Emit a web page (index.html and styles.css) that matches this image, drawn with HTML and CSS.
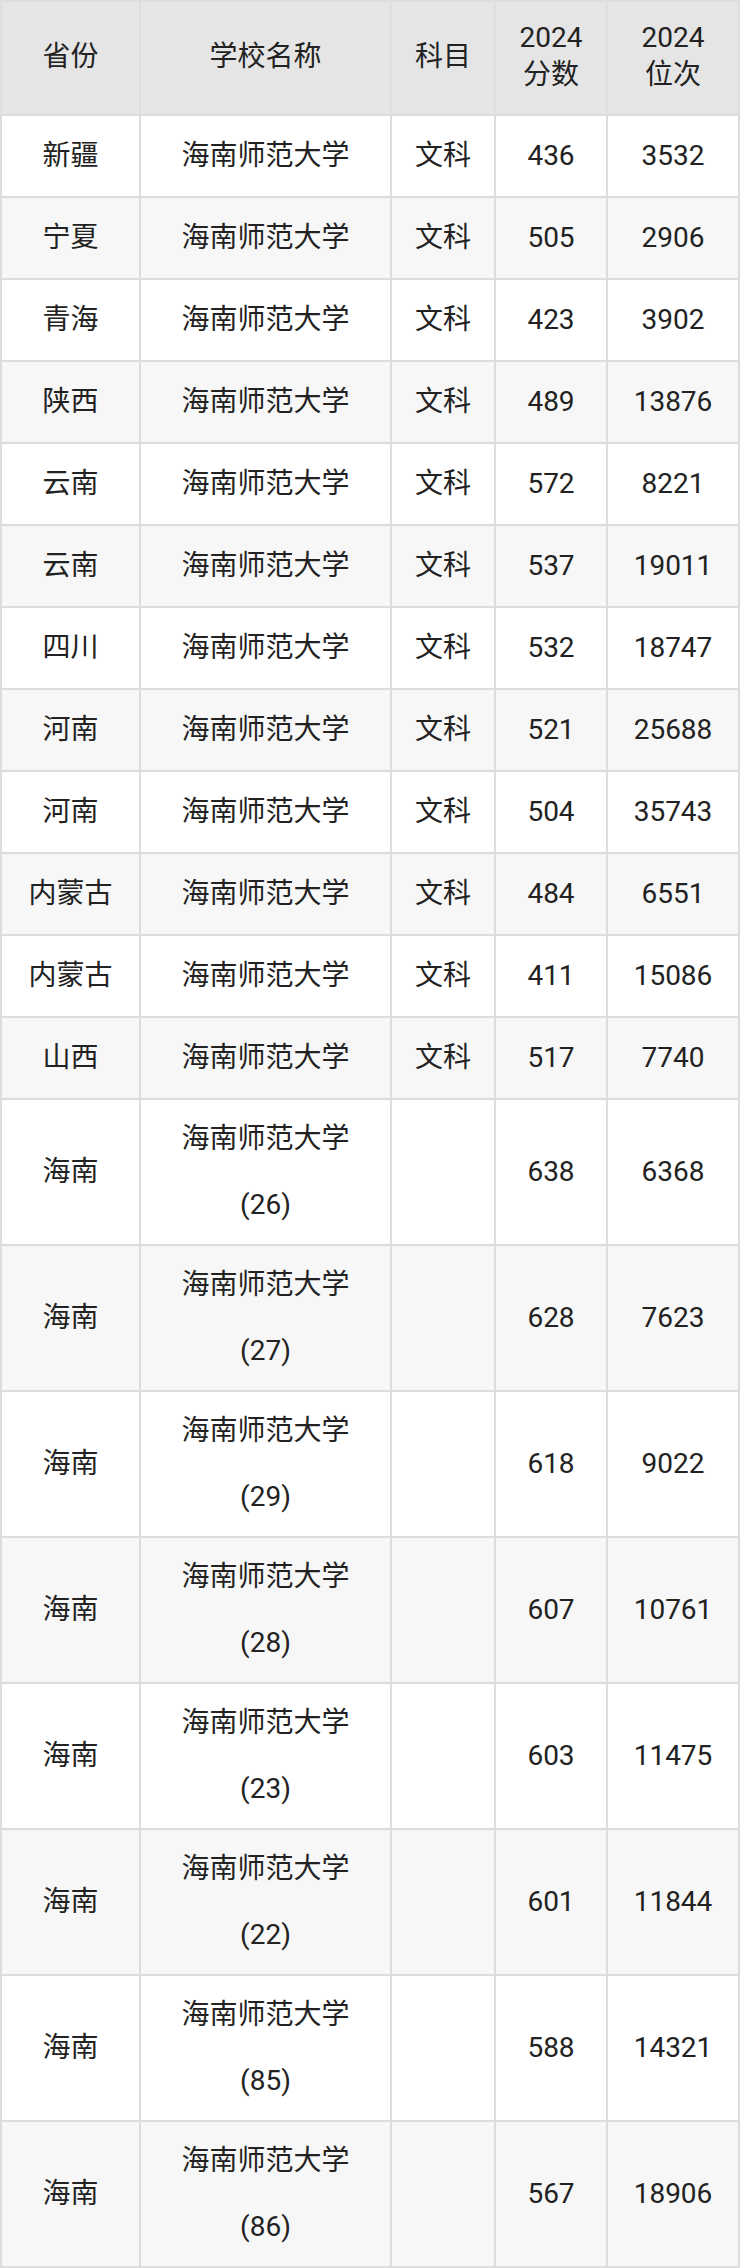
FILE: index.html
```html
<!DOCTYPE html>
<html lang="zh-CN">
<head>
<meta charset="utf-8">
<title>海南师范大学 2024 分数位次</title>
<link rel="stylesheet" href="styles.css">
</head>
<body>
<table class="score-table">
  <thead>
    <tr>
      <th class="c1">省份</th>
      <th class="c2">学校名称</th>
      <th class="c3">科目</th>
      <th class="c4">2024<br>分数</th>
      <th class="c5">2024<br>位次</th>
    </tr>
  </thead>
  <tbody>
    <tr><td>新疆</td><td>海南师范大学</td><td>文科</td><td>436</td><td>3532</td></tr>
    <tr><td>宁夏</td><td>海南师范大学</td><td>文科</td><td>505</td><td>2906</td></tr>
    <tr><td>青海</td><td>海南师范大学</td><td>文科</td><td>423</td><td>3902</td></tr>
    <tr><td>陕西</td><td>海南师范大学</td><td>文科</td><td>489</td><td>13876</td></tr>
    <tr><td>云南</td><td>海南师范大学</td><td>文科</td><td>572</td><td>8221</td></tr>
    <tr><td>云南</td><td>海南师范大学</td><td>文科</td><td>537</td><td>19011</td></tr>
    <tr><td>四川</td><td>海南师范大学</td><td>文科</td><td>532</td><td>18747</td></tr>
    <tr><td>河南</td><td>海南师范大学</td><td>文科</td><td>521</td><td>25688</td></tr>
    <tr><td>河南</td><td>海南师范大学</td><td>文科</td><td>504</td><td>35743</td></tr>
    <tr><td>内蒙古</td><td>海南师范大学</td><td>文科</td><td>484</td><td>6551</td></tr>
    <tr><td>内蒙古</td><td>海南师范大学</td><td>文科</td><td>411</td><td>15086</td></tr>
    <tr><td>山西</td><td>海南师范大学</td><td>文科</td><td>517</td><td>7740</td></tr>
    <tr><td>海南</td><td class="two">海南师范大学<br>(26)</td><td></td><td>638</td><td>6368</td></tr>
    <tr><td>海南</td><td class="two">海南师范大学<br>(27)</td><td></td><td>628</td><td>7623</td></tr>
    <tr><td>海南</td><td class="two">海南师范大学<br>(29)</td><td></td><td>618</td><td>9022</td></tr>
    <tr><td>海南</td><td class="two">海南师范大学<br>(28)</td><td></td><td>607</td><td>10761</td></tr>
    <tr><td>海南</td><td class="two">海南师范大学<br>(23)</td><td></td><td>603</td><td>11475</td></tr>
    <tr><td>海南</td><td class="two">海南师范大学<br>(22)</td><td></td><td>601</td><td>11844</td></tr>
    <tr><td>海南</td><td class="two">海南师范大学<br>(85)</td><td></td><td>588</td><td>14321</td></tr>
    <tr><td>海南</td><td class="two">海南师范大学<br>(86)</td><td></td><td>567</td><td>18906</td></tr>
  </tbody>
</table>
</body>
</html>
```
FILE: styles.css
```css
html, body {
  margin: 0;
  padding: 0;
  background: #ffffff;
}

.score-table {
  width: 740px;
  box-sizing: border-box;
  table-layout: fixed;
  border-collapse: separate;
  border-spacing: 0;
  border-top: 2px solid #dddddd;
  border-left: 2px solid #dddddd;
  font-family: Roboto, "Noto Sans CJK SC", sans-serif;
  font-size: 28px;
  color: #222222;
}

.score-table th,
.score-table td {
  box-sizing: border-box;
  border-right: 2px solid #dddddd;
  border-bottom: 2px solid #dddddd;
  text-align: center;
  vertical-align: middle;
  font-weight: normal;
  padding: 0;
}

.score-table th {
  background: #e5e5e5;
  line-height: 37px;
  padding: 17px 0 21px;
}

.score-table .c1 { width: 139px; }
.score-table .c2 { width: 251px; }
.score-table .c3 { width: 104px; }
.score-table .c4 { width: 112px; }
.score-table .c5 { width: 132px; }

.score-table td {
  line-height: 66px;
  padding: 7px 0;
}

.score-table td.two {
  padding: 6px 0;
}

.score-table tbody tr:nth-child(even) td {
  background: #f7f7f7;
}
```
